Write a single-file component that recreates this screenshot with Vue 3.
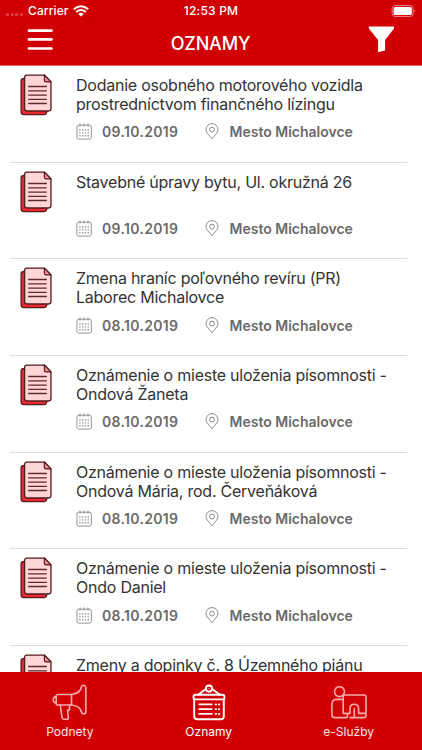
<script setup>
const notices = [
  { lines: ['Dodanie osobného motorového vozidla', 'prostredníctvom finančného lízingu'], date: '09.10.2019' },
  { lines: ['Stavebné úpravy bytu, Ul. okružná 26'], date: '09.10.2019' },
  { lines: ['Zmena hraníc poľovného revíru (PR)', 'Laborec Michalovce'], date: '08.10.2019' },
  { lines: ['Oznámenie o mieste uloženia písomnosti -', 'Ondová Žaneta'], date: '08.10.2019' },
  { lines: ['Oznámenie o mieste uloženia písomnosti -', 'Ondová Mária, rod. Červeňáková'], date: '08.10.2019' },
  { lines: ['Oznámenie o mieste uloženia písomnosti -', 'Ondo Daniel'], date: '08.10.2019' },
  { lines: ['Zmeny a dopinky č. 8 Územného piánu'], date: '08.10.2019' }
]
</script>

<template>
  <div class="screen">
    <header class="header">
      <div class="status">
        <div class="carrier">
          <span class="dots"><i></i><i></i><i></i><i></i></span>
          <span>Carrier</span>
          <svg class="wifi" viewBox="0 0 16 12">
            <path d="M.8 4.3Q8-1.9 15.2 4.3" fill="none" stroke="#fff" stroke-width="2" />
            <path d="M3.2 6.9Q8 3 12.8 6.9" fill="none" stroke="#fff" stroke-width="1.9" />
            <path d="M5.3 8.9Q8 6.8 10.7 8.9L8 11.6Z" fill="#fff" />
          </svg>
        </div>
        <span class="clock">12:53 PM</span>
        <div class="power">
          <svg class="battery" viewBox="0 0 26 12">
            <rect x="1.2" y=".6" width="21" height="10.8" rx="2.8" fill="none" stroke="#ee8587" />
            <rect x="2.6" y="2.1" width="18.2" height="7.8" rx="1.5" fill="#fff" />
            <path d="M23.6 4.2q1.5 1.8 0 3.6z" fill="#f09a9c" />
          </svg>
        </div>
      </div>
      <div class="bar">
        <svg class="menu" viewBox="0 0 26 22">
          <path d="M1.9 1.6h22.6M1.9 10.4h22.6M1.9 19.5h22.6" stroke="#fff" stroke-width="2.6" stroke-linecap="round" />
        </svg>
        <h1>OZNAMY</h1>
        <svg class="filter" viewBox="0 0 26 27">
          <path d="M.8.6H26V2.6L17.1 14.1V24.4L10.1 26.2V14.1L.8 2.6Z" fill="#fff" />
        </svg>
      </div>
    </header>

    <main class="list">
      <article v-for="(n, i) in notices" :key="i" class="item">
        <svg class="doc" viewBox="0 0 34 42">
          <path d="M5 4.5H4.2Q1.1 4.5 1.1 7V37.7Q1.1 40.6 4 40.6H24Q26.5 40.6 26.9 37.5Z" fill="#ed2a30" stroke="#521c20" stroke-width="1.3" />
          <path d="M7 1.1H24.6L31 7.9V34.6Q31 37 28.7 37H7Q4.6 37 4.6 34.6V3.5Q4.6 1.1 7 1.1Z" fill="#ffd5d7" stroke="#521c20" stroke-width="1.3" />
          <path d="M24.4 1.1V6.2Q24.4 7.9 26.1 7.9H31Z" fill="#f58b90" stroke="#521c20" stroke-width="1.2" stroke-linejoin="round" />
          <path d="M8.7 12.5h17.6M8.7 16.8h17.6M8.7 21.1h17.6M8.7 25.3h17.6M8.7 29.5h17.6" stroke="#5c292d" stroke-width="1.3" stroke-linecap="round" />
        </svg>
        <div class="body">
          <h2><span v-for="line in n.lines" :key="line">{{ line }}</span></h2>
          <div class="meta">
            <svg class="calendar" viewBox="0 0 16 17">
              <rect x=".9" y="2.2" width="14.4" height="13.9" rx="1.8" fill="none" stroke="#949494" />
              <path d="M4 .5v3M8 .5v3M12 .5v3" stroke="#888" stroke-width="1" />
              <path d="M3.2 7h10M3.2 9.9h10M3.2 12.8h10" stroke="#999" stroke-width="1.4" stroke-dasharray="1.4 1.4" />
            </svg>
            <span class="date">{{ n.date }}</span>
            <svg class="pin" viewBox="0 0 14 17">
              <path d="M7 15.8C4.8 12.4 1 9.9 1 6.6A6 6 0 0 1 13 6.6C13 9.9 9.2 12.4 7 15.8Z" fill="none" stroke="#8a8a8a" />
              <circle cx="7" cy="6.6" r="2.4" fill="none" stroke="#8a8a8a" />
            </svg>
            <span class="place">Mesto Michalovce</span>
          </div>
        </div>
      </article>
    </main>

    <nav class="tabs">
      <a class="tab">
        <svg viewBox="0 0 36 38" fill="none" stroke="#f6abad" stroke-width="1.6" stroke-linejoin="round" stroke-linecap="round">
          <path d="M6 10.5H19.5V21H6Q4.2 21 4.2 19.2V12.3Q4.2 10.5 6 10.5ZM4.2 12.2Q1.2 12.8 1.2 15.7T4.2 19.2" />
          <path d="M19.5 10.5Q28.7 9.2 29.3 3.2Q29.5 1.3 31.2 1.3T33.8 3.2V28Q33.8 29.9 31.8 29.9T29.3 28Q28.5 22 19.5 21" />
          <path d="M8.3 21L10 33.5Q10.2 35.2 11.8 35.2H15.2Q16.7 35.2 16.4 33.5L15.7 28.2V26.1H17.5V21" />
        </svg>
        <span>Podnety</span>
      </a>
      <a class="tab active">
        <svg viewBox="0 0 36 38" fill="none" stroke="#fff" stroke-width="1.9" stroke-linejoin="round" stroke-linecap="round">
          <path d="M7.1 10.8L15.2 4.8M20.8 4.8L28.9 10.8" />
          <circle cx="18" cy="4.6" r="3.1" />
          <circle cx="18" cy="4.6" r=".6" fill="#fff" stroke="none" />
          <rect x="2.5" y="10.8" width="31" height="4.6" rx="2" />
          <path d="M3.2 15.4V32.2Q3.2 35.3 6.3 35.3H29.7Q32.8 35.3 32.8 32.2V15.4" />
          <path d="M8.2 20.4h12.5M8.2 25.1h12.5M8.2 29.9h12.5M24.6 20.4h.5M27.8 20.4h.5M24.6 25.1h.5M27.8 25.1h.5M24.6 29.9h.5M27.8 29.9h.5" />
        </svg>
        <span>Oznamy</span>
      </a>
      <a class="tab">
        <svg viewBox="0 0 36 38" fill="none" stroke="#f6abad" stroke-width="1.6" stroke-linejoin="round" stroke-linecap="round">
          <circle cx="8.5" cy="7.6" r="5" />
          <path d="M12.2 15.4H5.8Q.9 15.4 .9 20.4V30.5Q.9 33.6 3.6 33.6H14.7Q16.6 33.6 16.6 31.5T14.7 29.4H12.2Z" />
          <path d="M12.2 15.4V13Q12.2 11 14.2 11H33Q35 11 35 13V31.6Q35 33.6 33 33.6H19M16.6 29.4H19V24.6Q19 20.3 23.3 20.3T27.6 24.6V29.4H35M23.3 24.6V33.6" />
        </svg>
        <span>e-Služby</span>
      </a>
    </nav>
  </div>
</template>

<style>
body {
  margin: 0;
  background: #fff;
}
</style>

<style scoped>
.screen {
  display: flex;
  flex-direction: column;
  width: 422px;
  height: 750px;
  overflow: hidden;
  background: #fff;
  font-family: Inter, "Liberation Sans", sans-serif;
}
svg {
  display: block;
  flex: none;
}
.header {
  flex: none;
  box-sizing: border-box;
  height: 66px;
  background: #d00004;
  border-bottom: 1px solid #e36467;
  color: #fff;
}
.status {
  display: grid;
  grid-template-columns: 1fr auto 1fr;
  align-items: center;
  height: 21px;
  font-size: 12px;
  font-weight: 500;
}
.carrier {
  display: flex;
  align-items: center;
  padding-left: 6px;
  letter-spacing: .1px;
}
.dots {
  display: flex;
  gap: 1.6px;
  width: 22px;
  padding-top: 7px;
}
.dots i {
  width: 3px;
  height: 3px;
  border-radius: 50%;
  background: #e24548;
}
.wifi {
  width: 16px;
  height: 12px;
  margin-left: 4px;
}
.clock {
  letter-spacing: .2px;
}
.power {
  display: flex;
  justify-content: flex-end;
  padding-right: 5px;
}
.battery {
  width: 26px;
  height: 12px;
}
.bar {
  display: grid;
  grid-template-columns: 26px 1fr 26px;
  align-items: start;
  padding: 7px 28px 0 27px;
}
.menu {
  width: 26px;
  height: 22px;
  margin-top: 1px;
}
.bar h1 {
  margin: 5px 0 0;
  text-align: center;
  font-size: 18px;
  line-height: 22px;
  font-weight: 500;
  letter-spacing: -.2px;
}
.filter {
  width: 26px;
  height: 27px;
  margin-top: -2px;
}
.list {
  flex: 1;
  min-height: 0;
  overflow: hidden;
}
.item {
  display: flex;
  box-sizing: border-box;
  height: 96.7px;
  margin: 0 15px 0 10px;
  padding: 8px 0 0 10px;
  border-bottom: 1px solid #dedede;
}
.doc {
  width: 34px;
  height: 42px;
}
.body {
  padding: 2px 0 0 22px;
}
h2 {
  height: 38px;
  margin: 0;
  color: #333;
  font-size: 16px;
  line-height: 19px;
  font-weight: 400;
  letter-spacing: -.24px;
}
h2 span {
  display: block;
  white-space: nowrap;
}
.meta {
  display: flex;
  align-items: center;
  height: 18px;
  margin-top: 8.7px;
  color: #6a6a6a;
  font-size: 14px;
  font-weight: 600;
}
.calendar {
  width: 16px;
  height: 17px;
}
.date {
  width: 102.5px;
  margin-left: 10px;
  letter-spacing: .32px;
}
.pin {
  width: 14px;
  height: 17px;
}
.place {
  margin-left: 11px;
  white-space: nowrap;
}
.tabs {
  flex: none;
  display: grid;
  grid-template-columns: 139.7px 138px 142px;
  height: 78px;
  background: #d00004;
}
.tab {
  display: flex;
  flex-direction: column;
  align-items: center;
  padding-top: 11.5px;
  color: #ffe3e3;
  font-size: 12px;
  line-height: 16px;
}
.tab svg {
  width: 36px;
  height: 38px;
  margin-bottom: 2.5px;
}
.active {
  color: #fff;
}
</style>
